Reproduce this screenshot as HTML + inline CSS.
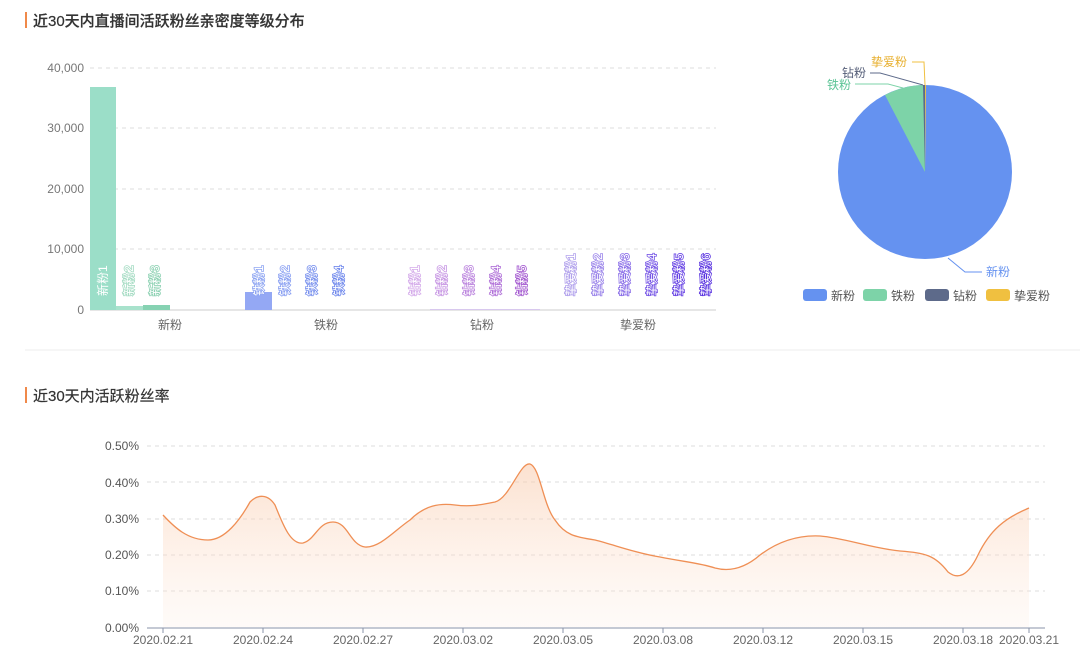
<!DOCTYPE html>
<html><head><meta charset="utf-8"><style>
body{margin:0;width:1080px;height:645px;background:#fff;overflow:hidden;font-family:"Liberation Sans","Noto Sans CJK SC",sans-serif;}
svg{position:absolute;left:0;top:0}
</style></head><body>
<svg width="1080" height="645" viewBox="0 0 1080 645" font-family="Liberation Sans, Noto Sans CJK SC, sans-serif">
<defs>
<linearGradient id="ag" x1="0" y1="0" x2="0" y2="1"><stop offset="0" stop-color="#f9c9a9" stop-opacity="0.55"/><stop offset="1" stop-color="#fde9dc" stop-opacity="0.2"/></linearGradient>
</defs>
<rect x="25" y="12" width="2" height="16" fill="#f0894a"/>
<text x="33" y="26" font-size="15" font-weight="500" fill="#333" stroke="#333" stroke-width="0.2">近30天内直播间活跃粉丝亲密度等级分布</text>
<rect x="25" y="387" width="2" height="16" fill="#f0894a"/>
<text x="33" y="401" font-size="15" fill="#333" stroke="#333" stroke-width="0.2">近30天内活跃粉丝率</text>
<line x1="25" y1="350" x2="1080" y2="350" stroke="#ececec"/>
<g stroke="#ddd" stroke-dasharray="4,4">
<line x1="90" y1="68" x2="716" y2="68"/><line x1="90" y1="128" x2="716" y2="128"/><line x1="90" y1="189" x2="716" y2="189"/><line x1="90" y1="249" x2="716" y2="249"/>
</g>
<line x1="90" y1="310" x2="716" y2="310" stroke="#ccc"/>
<g font-size="12" fill="#777" text-anchor="end">
<text x="84" y="72">40,000</text><text x="84" y="132">30,000</text><text x="84" y="193">20,000</text><text x="84" y="253">10,000</text><text x="84" y="314">0</text>
</g>
<g font-size="12" fill="#666" text-anchor="middle">
<text x="170" y="329">新粉</text><text x="326" y="329">铁粉</text><text x="482" y="329">钻粉</text><text x="638" y="329">挚爱粉</text>
</g>
<rect x="90" y="87" width="26" height="223" fill="#9bdec8"/>
<rect x="116" y="306" width="27" height="4" fill="#a8e2cc"/>
<rect x="143" y="305" width="27" height="5" fill="#86d2b2"/>
<rect x="245" y="292" width="27" height="18" fill="#94a8f4"/>
<rect x="430" y="309" width="110" height="1" fill="#d8c8ee"/>
<g font-size="12" stroke-width="1.6" paint-order="stroke">
<text transform="translate(107,296) rotate(-90)" fill="#fff" stroke="#9bdec8">新粉1</text>
<text transform="translate(133,296) rotate(-90)" fill="#fff" stroke="#a6dcc4">新粉2</text>
<text transform="translate(159,296) rotate(-90)" fill="#fff" stroke="#8fd2b4">新粉3</text>
<text transform="translate(263,296) rotate(-90)" fill="#fff" stroke="#8ea5f2">铁粉1</text>
<text transform="translate(289,296) rotate(-90)" fill="#fff" stroke="#8aa0f2">铁粉2</text>
<text transform="translate(316,296) rotate(-90)" fill="#fff" stroke="#7a92ee">铁粉3</text>
<text transform="translate(343,296) rotate(-90)" fill="#fff" stroke="#6f88ec">铁粉4</text>
<text transform="translate(419,296) rotate(-90)" fill="#fff" stroke="#d4aaea">钻粉1</text>
<text transform="translate(446,296) rotate(-90)" fill="#fff" stroke="#c898e4">钻粉2</text>
<text transform="translate(473,296) rotate(-90)" fill="#fff" stroke="#bc86de">钻粉3</text>
<text transform="translate(500,296) rotate(-90)" fill="#fff" stroke="#b070d8">钻粉4</text>
<text transform="translate(526,296) rotate(-90)" fill="#fff" stroke="#a45ad0">钻粉5</text>
<text transform="translate(575,296) rotate(-90)" fill="#fff" stroke="#b2a2ec">挚爱粉1</text>
<text transform="translate(602,296) rotate(-90)" fill="#fff" stroke="#9c86ea">挚爱粉2</text>
<text transform="translate(629,296) rotate(-90)" fill="#fff" stroke="#8a6ee8">挚爱粉3</text>
<text transform="translate(656,296) rotate(-90)" fill="#fff" stroke="#7858e6">挚爱粉4</text>
<text transform="translate(683,296) rotate(-90)" fill="#fff" stroke="#6844e4">挚爱粉5</text>
<text transform="translate(710,296) rotate(-90)" fill="#fff" stroke="#5a34e0">挚爱粉6</text>
</g>
<circle cx="925" cy="172" r="87" fill="#6592f0"/>
<path d="M925,172 L885,95 A87,87 0 0 1 925,85 Z" fill="#7dd3a8"/>
<path d="M925,172 L923,85 A87,87 0 0 1 925,85 Z" fill="#5d6a8a"/>
<path d="M925,172 L925,85 L926,85 Z" fill="#f0c040"/>
<polyline points="948,258 965,272 982,272" fill="none" stroke="#6592f0"/>
<text x="986" y="276" font-size="12" fill="#6592f0">新粉</text>
<polyline points="903,88 888,84 855,84" fill="none" stroke="#7dd3a8"/>
<text x="827" y="89" font-size="12" fill="#5cc496">铁粉</text>
<polyline points="923,85 880,73 870,73" fill="none" stroke="#5d6a8a"/>
<text x="842" y="77" font-size="12" fill="#555e78">钻粉</text>
<polyline points="925,85 924,62 912,62" fill="none" stroke="#f0c040"/>
<text x="871" y="66" font-size="12" fill="#e8b030">挚爱粉</text>
<g font-size="12" fill="#555">
<rect x="803" y="289" width="24" height="12" rx="3" fill="#6592f0"/><text x="831" y="300">新粉</text>
<rect x="863" y="289" width="24" height="12" rx="3" fill="#7dd3a8"/><text x="891" y="300">铁粉</text>
<rect x="925" y="289" width="24" height="12" rx="3" fill="#5d6a8a"/><text x="953" y="300">钻粉</text>
<rect x="986" y="289" width="24" height="12" rx="3" fill="#f0c040"/><text x="1014" y="300">挚爱粉</text>
</g>
<g stroke="#ddd" stroke-dasharray="4,4">
<line x1="147" y1="446" x2="1045" y2="446"/><line x1="147" y1="482" x2="1045" y2="482"/><line x1="147" y1="519" x2="1045" y2="519"/><line x1="147" y1="555" x2="1045" y2="555"/><line x1="147" y1="591" x2="1045" y2="591"/>
</g>
<g font-size="12" fill="#555" text-anchor="end">
<text x="139" y="450">0.50%</text><text x="139" y="487">0.40%</text><text x="139" y="523">0.30%</text><text x="139" y="559">0.20%</text><text x="139" y="595">0.10%</text><text x="139" y="632">0.00%</text>
</g>
<path d="M163,515 C175,528 188,540 208,540 C225,540 240,520 250,502 C258,494 268,494 275,505 C282,522 290,545 303,543 C315,540 318,522 333,522 C348,522 350,545 365,547 C380,548 395,530 410,520 C425,505 440,503 455,505 C470,507 480,505 495,502 C510,498 520,462 530,464 C540,467 543,505 555,520 C565,535 575,537 595,540 C615,545 635,553 660,557 C685,562 700,563 715,568 C730,572 745,568 760,555 C780,540 800,535 820,536 C845,538 870,548 900,551 C925,553 935,555 948,572 C958,580 968,576 978,555 C990,530 1005,518 1029,508 L1029,627 L163,627 Z" fill="url(#ag)"/>
<path d="M163,515 C175,528 188,540 208,540 C225,540 240,520 250,502 C258,494 268,494 275,505 C282,522 290,545 303,543 C315,540 318,522 333,522 C348,522 350,545 365,547 C380,548 395,530 410,520 C425,505 440,503 455,505 C470,507 480,505 495,502 C510,498 520,462 530,464 C540,467 543,505 555,520 C565,535 575,537 595,540 C615,545 635,553 660,557 C685,562 700,563 715,568 C730,572 745,568 760,555 C780,540 800,535 820,536 C845,538 870,548 900,551 C925,553 935,555 948,572 C958,580 968,576 978,555 C990,530 1005,518 1029,508" fill="none" stroke="#ef8f55" stroke-width="1.3"/>
<line x1="147" y1="628" x2="1045" y2="628" stroke="#8a93a8"/>
<g stroke="#8a93a8">
<line x1="163" y1="628" x2="163" y2="633"/><line x1="263" y1="628" x2="263" y2="633"/><line x1="363" y1="628" x2="363" y2="633"/><line x1="463" y1="628" x2="463" y2="633"/><line x1="563" y1="628" x2="563" y2="633"/><line x1="663" y1="628" x2="663" y2="633"/><line x1="763" y1="628" x2="763" y2="633"/><line x1="863" y1="628" x2="863" y2="633"/><line x1="963" y1="628" x2="963" y2="633"/><line x1="1029" y1="628" x2="1029" y2="633"/>
</g>
<g font-size="12" fill="#666" text-anchor="middle">
<text x="163" y="644">2020.02.21</text><text x="263" y="644">2020.02.24</text><text x="363" y="644">2020.02.27</text><text x="463" y="644">2020.03.02</text><text x="563" y="644">2020.03.05</text><text x="663" y="644">2020.03.08</text><text x="763" y="644">2020.03.12</text><text x="863" y="644">2020.03.15</text><text x="963" y="644">2020.03.18</text><text x="1029" y="644">2020.03.21</text>
</g>
</svg>
</body></html>
